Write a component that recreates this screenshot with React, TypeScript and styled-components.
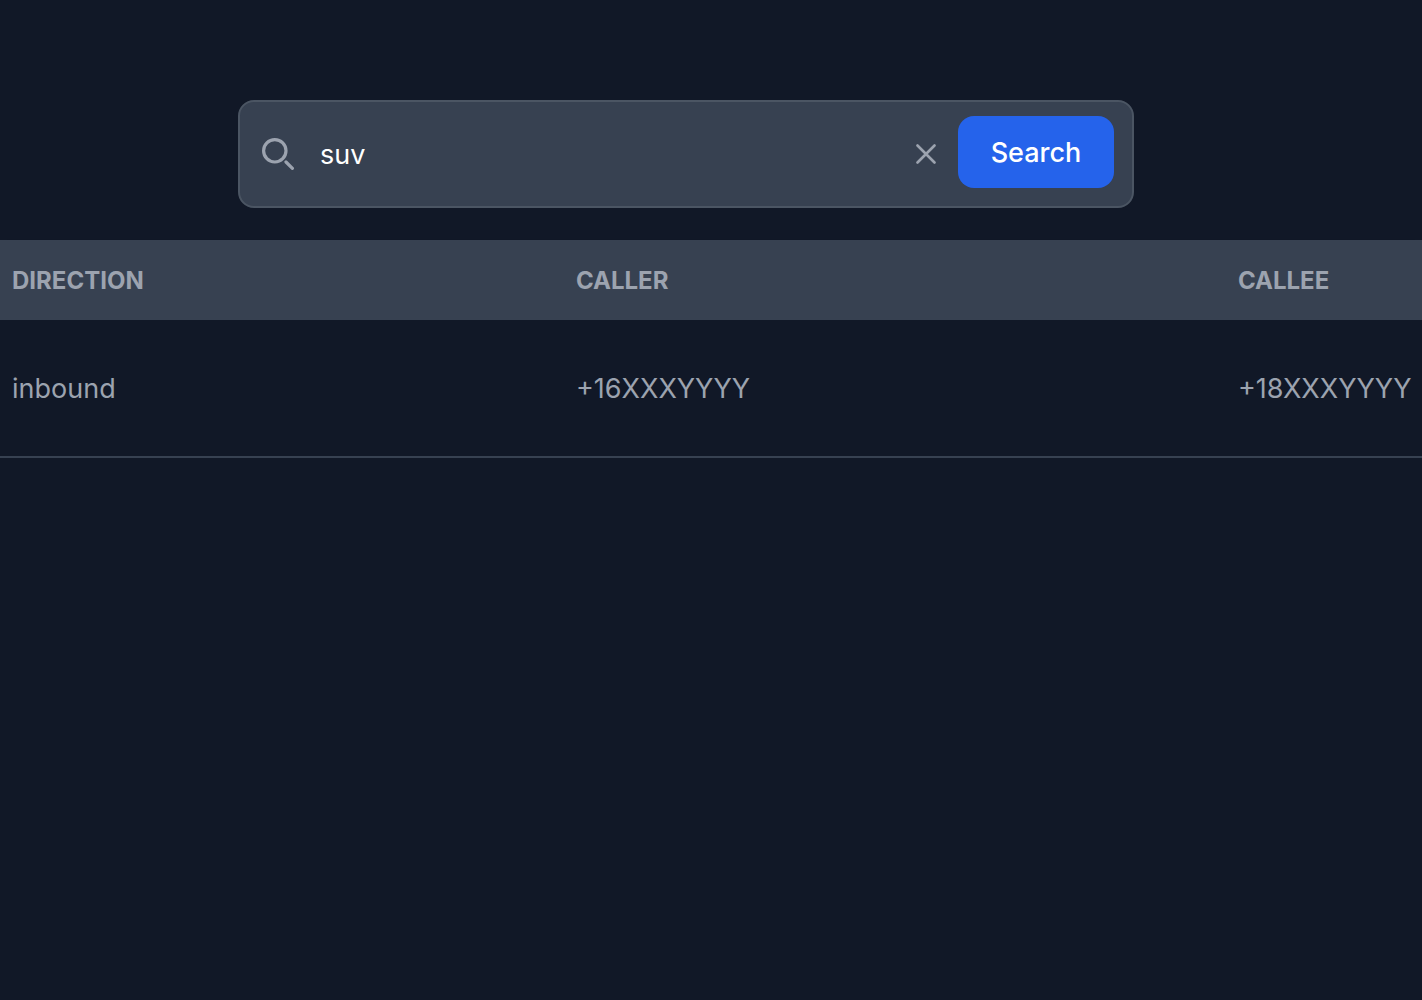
import React, { useRef, useState } from "react";
import styled, { createGlobalStyle } from "styled-components";

const GlobalStyle = createGlobalStyle`
  *, *::before, *::after { box-sizing: border-box; }
  body {
    margin: 0;
    background: #111827;
    color: #9ca3af;
    font-family: Inter, "Liberation Sans", sans-serif;
    font-size: 27px;
    line-height: 40px;
    -webkit-font-smoothing: antialiased;
  }
`;

const Page = styled.main`
  padding-top: 100px;
  overflow-x: hidden;
`;

const SearchArea = styled.div`
  display: flex;
  justify-content: center;
  padding: 0 50px 32px 0;
`;

const SearchForm = styled.form`
  display: flex;
  align-items: center;
  width: 100%;
  max-width: 896px;
  padding: 14px 18px 14px 22px;
  background: #374151;
  border: 2px solid #4b5563;
  border-radius: 16px;
`;

const SearchLabel = styled.label`
  display: flex;
  flex: none;
  margin-right: 26px;
`;

const SearchInput = styled.input`
  flex: 1;
  min-width: 0;
  padding: 2px 0 0;
  border: 0;
  outline: 0;
  background: transparent;
  color: #ffffff;
  font: inherit;
`;

const ClearButton = styled.button`
  display: flex;
  flex: none;
  margin: 0 22px 0 16px;
  padding: 0;
  border: 0;
  background: transparent;
  color: #9ca3af;
  cursor: pointer;
`;

const SubmitButton = styled.button`
  flex: none;
  min-width: 156px;
  margin-bottom: 4px;
  padding: 17px 32px 15px;
  border: 0;
  border-radius: 16px;
  background: #2563eb;
  color: #ffffff;
  font: inherit;
  font-weight: 500;
  cursor: pointer;
`;

const CallTable = styled.table`
  width: 100%;
  table-layout: fixed;
  border-collapse: collapse;
  text-align: left;
  box-shadow: 0 8px 12px -2px rgba(0, 0, 0, 0.1), 0 4px 8px -4px rgba(0, 0, 0, 0.1);
`;

const Column = styled.col<{ $share?: string }>`
  width: ${({ $share }) => $share ?? "auto"};
`;

const HeadCell = styled.th`
  padding: 25px 0 23px 12px;
  background: #374151;
  font-size: 24px;
  line-height: 32px;
  font-weight: 700;
  text-transform: uppercase;
`;

const Row = styled.tr`
  border-bottom: 2px solid #374151;
`;

const Cell = styled.td`
  padding: 49px 0 47px 12px;
  white-space: nowrap;
`;

const calls = [
  { direction: "inbound", caller: "+16XXXYYYY", callee: "+18XXXYYYY" },
];

function SearchIcon() {
  return (
    <svg width="32" height="32" viewBox="0 0 20 20" fill="none" aria-hidden="true">
      <path
        d="m19 19-4-4m0-7A7 7 0 1 1 1 8a7 7 0 0 1 14 0Z"
        stroke="#9ca3af"
        strokeWidth="2"
        strokeLinecap="round"
        strokeLinejoin="round"
      />
    </svg>
  );
}

function ClearIcon() {
  return (
    <svg width="20" height="20" viewBox="0 0 20 20" fill="none" aria-hidden="true">
      <path
        d="M1.5 1.5 18.5 18.5M18.5 1.5 1.5 18.5"
        stroke="currentColor"
        strokeWidth="2.6"
        strokeLinecap="round"
      />
    </svg>
  );
}

export default function App() {
  const [query, setQuery] = useState("suv");
  const inputRef = useRef<HTMLInputElement>(null);

  const clear = () => {
    setQuery("");
    inputRef.current?.focus();
  };

  return (
    <>
      <GlobalStyle />
      <Page>
        <SearchArea>
          <SearchForm role="search" onSubmit={(event) => event.preventDefault()}>
            <SearchLabel htmlFor="call-search" aria-label="Search calls">
              <SearchIcon />
            </SearchLabel>
            <SearchInput
              ref={inputRef}
              id="call-search"
              type="text"
              value={query}
              onChange={(event) => setQuery(event.target.value)}
            />
            <ClearButton type="button" aria-label="Clear search" onClick={clear}>
              <ClearIcon />
            </ClearButton>
            <SubmitButton type="submit">Search</SubmitButton>
          </SearchForm>
        </SearchArea>
        <CallTable>
          <colgroup>
            <Column $share="39.66%" />
            <Column $share="46.55%" />
            <Column />
          </colgroup>
          <thead>
            <tr>
              <HeadCell scope="col">Direction</HeadCell>
              <HeadCell scope="col">Caller</HeadCell>
              <HeadCell scope="col">Callee</HeadCell>
            </tr>
          </thead>
          <tbody>
            {calls.map((call) => (
              <Row key={call.caller}>
                <Cell>{call.direction}</Cell>
                <Cell>{call.caller}</Cell>
                <Cell>{call.callee}</Cell>
              </Row>
            ))}
          </tbody>
        </CallTable>
      </Page>
    </>
  );
}
